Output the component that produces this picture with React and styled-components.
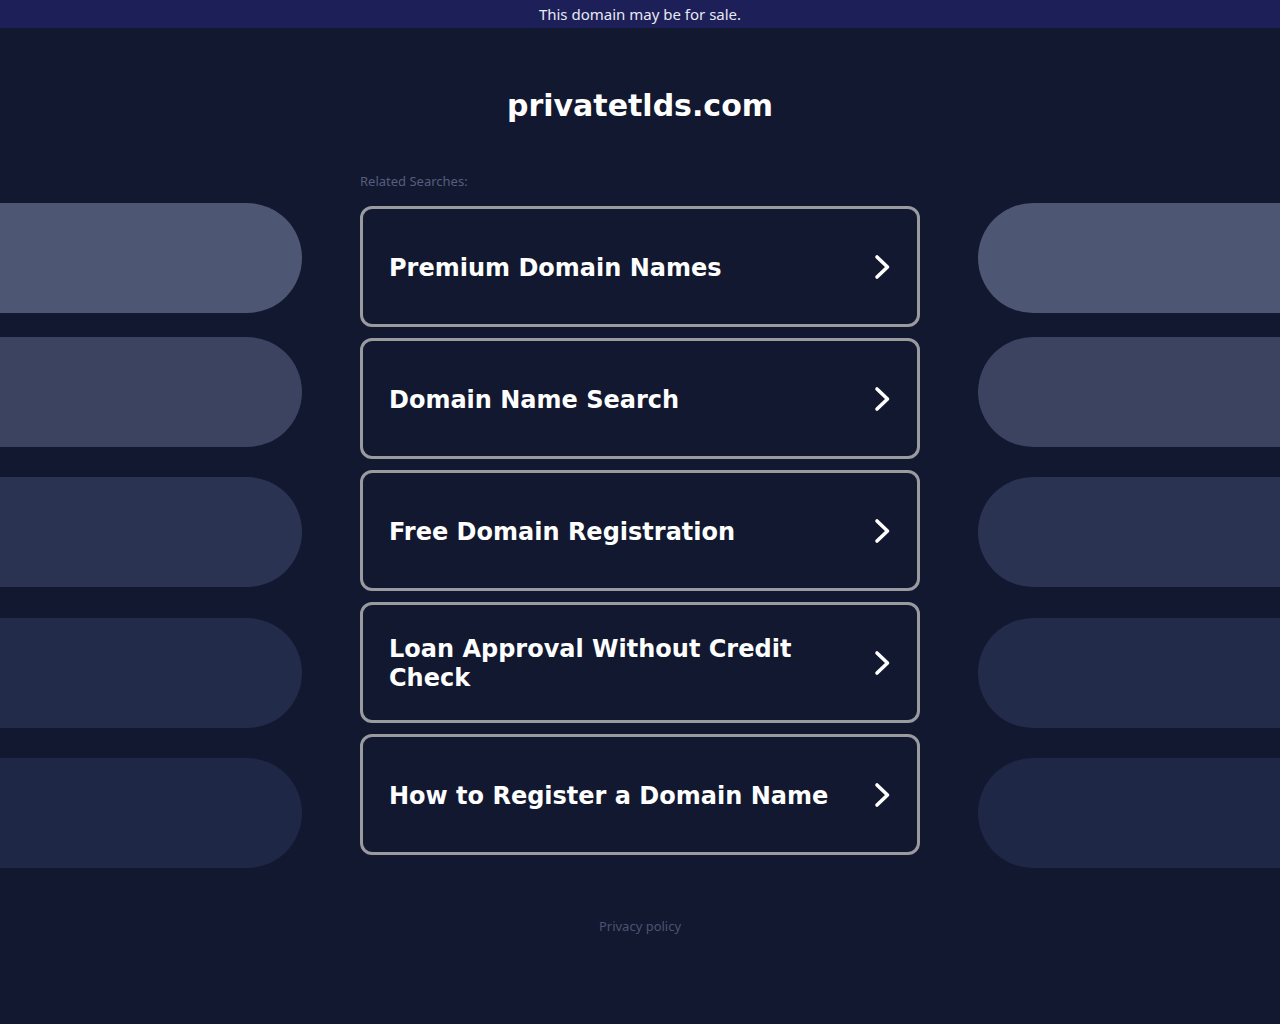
import React from "react";
import styled, { createGlobalStyle } from "styled-components";

const Global = createGlobalStyle`
  html, body { margin: 0; padding: 0; background: #121830; }
  body { font-family: "DejaVu Sans", sans-serif; }
`;

const Page = styled.div`
  min-height: 1024px;
  background: #121830;
  display: flex;
  flex-direction: column;
`;

const TopBar = styled.div`
  height: 28px;
  background: #1c1f58;
  display: flex;
  align-items: center;
  justify-content: center;
  color: #e8e9f2;
  font-family: "Noto Sans", "Open Sans", sans-serif;
  font-size: 15px;
`;

const Title = styled.h1`
  margin: 0;
  padding-top: 60px;
  height: 84px;
  text-align: center;
  color: #ffffff;
  font-family: "DejaVu Sans", sans-serif;
  font-weight: bold;
  font-size: 30px;
  line-height: 36px;
  box-sizing: border-box;
`;

const Grid = styled.div`
  display: grid;
  grid-template-columns: 302px 560px 302px;
  column-gap: 58px;
  margin-top: 60px;
  align-items: start;
`;

const PillColumn = styled.div`
  display: flex;
  flex-direction: column;
  padding-top: 31px;
`;

const Pill = styled.div`
  height: 110px;
  margin-top: ${(p) => p.$gap}px;
  background: ${(p) => p.$color};
  border-radius: ${(p) => (p.$side === "left" ? "0 55px 55px 0" : "55px 0 0 55px")};
`;

const Center = styled.div`
  display: flex;
  flex-direction: column;
`;

const Label = styled.div`
  font-family: "Noto Sans", "Open Sans", sans-serif;
  font-size: 13px;
  line-height: 16px;
  color: #565e7c;
  margin-top: 1px;
  margin-bottom: 17px;
`;

const Cards = styled.div`
  display: flex;
  flex-direction: column;
  gap: 11px;
`;

const Card = styled.a`
  height: 121px;
  box-sizing: border-box;
  border: 3px solid #9a9b9f;
  border-radius: 12px;
  display: flex;
  align-items: center;
  justify-content: space-between;
  padding: 0 24px 0 26px;
  color: #ffffff;
  text-decoration: none;
  background: #121830;
`;

const CardText = styled.span`
  font-family: "DejaVu Sans", sans-serif;
  font-weight: bold;
  font-size: 24px;
  line-height: 29px;
  max-width: 440px;
  padding-top: 3px;
`;

const Chevron = styled.svg`
  width: 20px;
  height: 30px;
  flex: none;
`;

const Footer = styled.div`
  text-align: center;
  margin-top: 49px;
  font-family: "Noto Sans", "Open Sans", sans-serif;
  font-size: 13px;
  color: #4c5370;
`;

const gaps = [0, 24, 30, 31, 30];
const colors = ["#4d5672", "#3b4360", "#2b3352", "#232b4b", "#1f2746"];
const items = [
  "Premium Domain Names",
  "Domain Name Search",
  "Free Domain Registration",
  "Loan Approval Without Credit Check",
  "How to Register a Domain Name",
];

function Pills({ side }) {
  return (
    <PillColumn>
      {colors.map((c, i) => (
        <Pill key={i} $color={c} $gap={gaps[i]} $side={side} />
      ))}
    </PillColumn>
  );
}

export default function App() {
  return (
    <Page>
      <Global />
      <TopBar>This domain may be for sale.</TopBar>
      <Title>privatetlds.com</Title>
      <Grid>
        <Pills side="left" />
        <Center>
          <Label>Related Searches:</Label>
          <Cards>
            {items.map((t) => (
              <Card key={t} href="#">
                <CardText>{t}</CardText>
                <Chevron viewBox="0 0 20 30">
                  <path
                    d="M4 5 L14.5 15 L4 25"
                    fill="none"
                    stroke="#ffffff"
                    strokeWidth="3.6"
                    strokeLinecap="round"
                    strokeLinejoin="round"
                  />
                </Chevron>
              </Card>
            ))}
          </Cards>
        </Center>
        <Pills side="right" />
      </Grid>
      <Footer>Privacy policy</Footer>
    </Page>
  );
}
